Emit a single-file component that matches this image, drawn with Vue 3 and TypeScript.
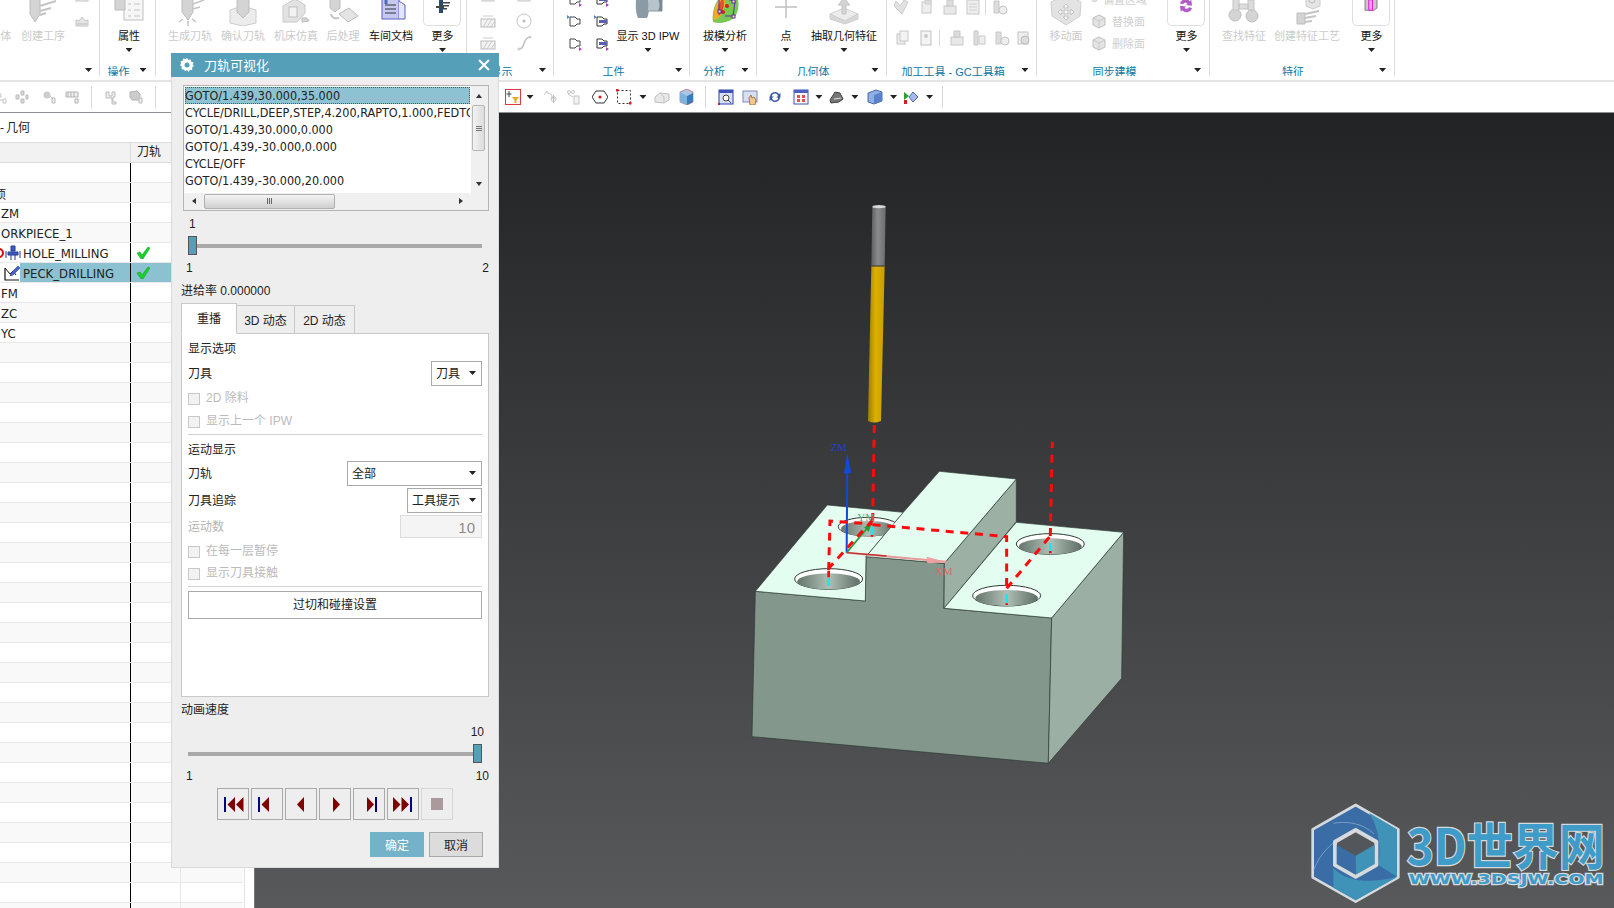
<script setup lang="ts">
interface Placed { c: number; w: number; ml?: number }
interface Placed2 extends Placed { icon?: string }
interface Tool extends Placed {
  kind: 'tool' | 'grid' | 'rows' | 'list'
  label?: string
  icon?: string
  dark?: boolean
  caret?: boolean
  box?: boolean
  cells?: string[]
  gap?: number
  rows?: Placed2[][]
  lines?: { icon: string; text: string }[]
}
interface Group { x: number; end: number; label?: string; lc?: number; ac: number; items: Tool[] }

const G = 'fill="#d4d4d4" stroke="#bdbdbd"'
const L = 'fill="none" stroke="#c4c4c4"'
const ICONS: Record<string, string> = {
  createOp: `<path d="M3-6h10v22l-5 8-5-8z" ${G}/><path d="M13 8l16-5M13 13l11-3M13 17l6-2" ${L} stroke-width="2"/>`,
  attr: `<rect x="11" y="-4" width="19" height="26" fill="#f6f6f6" stroke="#c0c0c0"/><path d="M15 6h3M21 6h6M15 12h3M21 12h6M15 18h3M21 18h6" ${L}/><path d="M2-6h10v18H2z" ${G}/>`,
  gen: `<path d="M8-6h11v20l-5 8-6-8z" ${G}/><path d="M19 6l11-4M19 11l7-2M5 24l4-3M22 24l-4-3M14 28v-5" ${L} stroke-width="1.5"/>`,
  verify: `<path d="M3 12l13-4 13 4v13l-13 3-13-3z" fill="#ececec" stroke="#ccc"/><path d="M10-6h12v20l-6 6-6-6z" ${G}/>`,
  machine: `<path d="M3 24V8l12-7 10 6v8l-8 9z" fill="#e2e2e2" stroke="#c8c8c8"/><rect x="9" y="9" width="8" height="10" fill="#f2f2f2" stroke="#c0c0c0"/><path d="M22 20c4-1 6 0 7 3l-7 1z" ${G}/>`,
  post: `<path d="M3-6h10v16l-5 4-5-4z" ${G}/><path d="M12 16l10-6 9 8-10 6z" fill="#e4e4e4" stroke="#bbb"/><path d="M4 16c1 4 4 5 8 4" ${L} stroke-width="2"/>`,
  doc: `<rect x="7" y="-5" width="17" height="26" fill="#c5c9f2" stroke="#5a62c0"/><path d="M24 3l6 4v14h-6" fill="#e3e5f9" stroke="#5a62c0"/><path d="M10 7h11M10 11h11M10 15h11" stroke="#333" stroke-width="1"/><path d="M11 1v5" stroke="#4c6bb5" stroke-width="3"/>`,
  moreTool: `<path d="M13 3h4v13h-4z" fill="#2c4a70"/><path d="M10 9h8v2h-8zM17 5h7v1.5h-7zM17 8h6v1.5h-6zM17 11h4v1.5h-4z" fill="#444"/>`,
  moreSync: `<g transform="translate(4 -1) scale(.75)"><path d="M8 10a7.5 7.5 0 0 1 13-3l2-2 1 8-8-1 2-2a4 4 0 0 0-6 1zM24 16a7.5 7.5 0 0 1-13 3l-2 2-1-8 8 1-2 2a4 4 0 0 0 6-1z" fill="#b35cc8"/></g>`,
  moreFeat: `<g transform="translate(4 -1) scale(.75)"><path d="M8 4l5-3h11v15l-4 3H8z" fill="#c8c8c8" stroke="#666"/><path d="M13 5h5v14h-5z" fill="#f4a0ec" stroke="#e020d0" stroke-width="1.4"/></g>`,
  ipw: `<path d="M6-6h9c3 6 3 20 0 26H6c-3-6-3-20 0-26z" fill="#8a9ba6"/><path d="M15 1h15v12H15c1-4 1-8 0-12z" fill="#b7c4cc" stroke="#8a98a2"/><path d="M26 1c2 4 2 8 0 12h4V1z" fill="#7a8a94"/>`,
  draft: `<path d="M4 24C2 12 8 0 15-4h12c4 8 3 18-2 24-7 5-15 6-21 4z" fill="#79c854"/><path d="M5 22C3 12 8 3 14-3c4 6 2 16-4 23z" fill="#e8b028"/><path d="M10 18c-3-6 0-14 4-18 2 6 1 12-4 18z" fill="#e05030"/><path d="M10 0h7M10 0v14h6M16 0l10 4-2 14h-8" fill="none" stroke="#5a2fa8"/><circle cx="18" cy="8" r="2" fill="#d02020"/><circle cx="14" cy="14" r="2" fill="#d02020"/><rect x="23" y="2" width="3" height="3" fill="#ffe680" stroke="#5a2fa8"/><rect x="23" y="17" width="3" height="3" fill="#ffe680" stroke="#5a2fa8"/><rect x="9" y="12" width="3" height="3" fill="#ffe680" stroke="#5a2fa8"/>`,
  point: `<path d="M16-2v22M5 9h22" stroke="#c0c0c0" stroke-width="1.5"/>`,
  extract: `<path d="M2 16l14-6 14 6-13 7z" fill="#ececec" stroke="#d2d2d2"/><path d="M2 16v5l15 5 13-5v-5l-13 7z" fill="#d8d8d8" stroke="#cfcfcf"/><path d="M16 0l6 7h-4v9h-4V7h-4z" fill="#d4d4d4" stroke="#c4c4c4"/>`,
  move: `<path d="M1 4l15-8 15 8-1 14-14 9-14-9z" fill="#e3e3e3" stroke="#cfcfcf"/><path d="M16 6l3 3h-2v4h4v-2l3 3-3 3v-2h-4v4h2l-3 3-3-3h2v-4h-4v2l-3-3 3-3v2h4V9h-2z" fill="#f4f4f4" stroke="#c4c4c4"/>`,
  find: `<circle cx="7" cy="17" r="6" ${G}/><circle cx="24" cy="18" r="6" ${G}/><path d="M5 0h6v12H5zM20 2h6v10h-6zM11 6h9v5h-9z" fill="#dcdcdc" stroke="#c4c4c4"/>`,
  feature: `<path d="M6 15h8v11H6z" ${G}/><path d="M14 16l14-3M14 20l11-2M14 24l7-1" ${L} stroke-width="2"/><path d="M15-2h14v10l-7 3-7-3z" fill="#e4e4e4" stroke="#ccc"/><circle cx="21" cy="2" r="3" fill="none" stroke="#bbb"/>`,
  s1: `<rect x="2" y="2" width="12" height="8" fill="#eee" stroke="#c4c4c4"/><path d="M4 5h8" stroke="#ccc"/>`,
  s2: `<path d="M2 13V7l3 1 3-4 3 4 3-1v6z" fill="#e6e6e6" stroke="#c4c4c4"/><path d="M3 11h10" stroke="#bbb"/>`,
  hatch: `<rect x="1" y="6" width="14" height="8" fill="#f2f2f2" stroke="#bbb"/><path d="M3 14l5-8M7 14l5-8M11 14l4-6" stroke="#ccc"/><path d="M3 3h10" stroke="#ccc"/>`,
  dot: `<circle cx="8" cy="8" r="7" fill="#fff" stroke="#c4c4c4"/><circle cx="8" cy="8" r="1.5" fill="#bbb"/>`,
  curve: `<path d="M3 14c5 0 4-5 6-8s2-4 5-4" fill="none" stroke="#c0c0c0" stroke-width="1.5"/><circle cx="3" cy="14" r="1.5" fill="#ccc"/><circle cx="14" cy="2" r="1.5" fill="#ccc"/>`,
  flagA: `<path d="M3 4h5l2 2h3v5h-3l-2 2H3z" fill="#fff" stroke="#444"/><path d="M12 12l3 2-3 2z" fill="#b040c0"/>`,
  flagB: `<path d="M3 4h5l2 2h3v5h-3l-2 2H3z" fill="#fff" stroke="#333"/><path d="M5 7h8v3H5z" fill="#5a60b8"/><path d="M12 12l3 2-3 2z" fill="#b040c0"/>`,
  flagC: `<path d="M3 4h5l2 2h3v5h-3l-2 2H3z" fill="#fff" stroke="#444"/><path d="M0 2l3 2-3 2z" fill="#4a90d0"/>`,
  flagD: `<path d="M3 4h5l2 2h3v5h-3l-2 2H3z" fill="#fff" stroke="#333"/><path d="M5 7h8v3H5z" fill="#5a60b8"/><path d="M0 2l3 2-3 2z" fill="#4a90d0"/>`,
  gc1: `<path d="M2 2l4 5 4-6 4 2-6 12-8-8z" fill="#e2e2e2" stroke="#ccc"/>`,
  gc2: `<rect x="3" y="3" width="9" height="11" fill="#eee" stroke="#c8c8c8"/><path d="M6 1h6v4H6z" fill="#ddd" stroke="#ccc"/>`,
  gc3: `<rect x="2" y="7" width="12" height="8" fill="#e8e8e8" stroke="#c8c8c8"/><rect x="5" y="1" width="6" height="6" fill="#ddd" stroke="#c8c8c8"/>`,
  gc4: `<rect x="2" y="1" width="12" height="14" fill="#eee" stroke="#c8c8c8"/><path d="M4 5h8M4 8h8M4 11h8" stroke="#d0d0d0"/>`,
  gc5: `<rect x="1" y="4" width="8" height="10" fill="#ececec" stroke="#c8c8c8"/><rect x="4" y="1" width="8" height="10" fill="#f4f4f4" stroke="#c8c8c8"/>`,
  gc6: `<rect x="3" y="1" width="10" height="14" fill="#f4f4f4" stroke="#c0c0c0"/><circle cx="8" cy="6" r="2" fill="#ccc"/>`,
  gc7: `<path d="M3 1h4v14H3z" fill="#ddd" stroke="#c8c8c8"/><path d="M8 6h6v8H8z" fill="#eee" stroke="#c8c8c8"/>`,
  gc8: `<path d="M2 2h5v12H2z" fill="#ddd" stroke="#c8c8c8"/><circle cx="11" cy="11" r="4" fill="#eee" stroke="#c4c4c4"/>`,
  gc9: `<rect x="3" y="2" width="10" height="12" fill="#eee" stroke="#c4c4c4"/><circle cx="10" cy="10" r="4" fill="#ddd" stroke="#bbb"/>`,
  face: `<path d="M2 5l6-3 6 3v7l-6 3-6-3z" fill="#e4e4e4" stroke="#bdbdbd"/><path d="M8 8v7M8 8L2 5M8 8l6-3" stroke="#c8c8c8" fill="none"/>`,
  t1: `<path d="M1 5h3v3H1zM6 5h3v3H6zM11 10h3v4h-3zM3 8l3 3h5" ${L}/>`,
  t2: `<path d="M2 6h3v4H2zM7 2h3v4H7zM7 10h3v4H7zM12 6h2v4h-2z" fill="#d8d8d8" stroke="#bbb"/>`,
  t3: `<circle cx="5" cy="6" r="3.5" fill="#ccc"/><path d="M10 9h3v5h-3zM8 7l3 3" fill="#eee" stroke="#bbb"/>`,
  t4: `<path d="M2 3h12v5H2zM4 3v5M7 3v5M10 3v5M11 10h3v4h-3z" fill="#eee" stroke="#b4b4b4"/>`,
  t5: `<path d="M2 3h3v4h3V3h3v5h-2v5h3v2H8V9H2z" fill="#f0f0f0" stroke="#bbb"/>`,
  t6: `<path d="M2 3l7-1 3 3v6H4l-2-3z" fill="#ccc" stroke="#b4b4b4"/><path d="M11 9h3v5h-3z" fill="#eee" stroke="#bbb"/>`,
  sel: `<rect x=".5" y=".5" width="15" height="15" fill="#fff" stroke="#d83c3c"/><path d="M4 2v6M1.5 5h5" stroke="#444"/><path d="M7 8h7l-2.5 3v3h-2v-3z" fill="#e8a820"/>`,
  undoCross: `<path d="M2 6l3-4v2c3 0 5 1 5 4" ${L}/><path d="M9 9h5M11.5 6v8" stroke="#bbb"/><circle cx="11.5" cy="10" r="2.5" ${L}/>`,
  chain: `<circle cx="3" cy="3" r="1.5" ${L}/><circle cx="7" cy="3" r="1.5" ${L}/><rect x="8" y="7" width="5" height="8" fill="#f3f3f3" stroke="#c4c4c4"/><path d="M2 5l5 3" ${L}/>`,
  hex: `<path d="M4 2h8l4 6-4 6H4L0 8z" fill="#fff" stroke="#333"/><circle cx="8" cy="8" r="1.6" fill="#d02020"/>`,
  dash: `<rect x="1.5" y="1.5" width="13" height="13" fill="none" stroke="#333" stroke-dasharray="2 2"/><rect x="13" y="13" width="2.5" height="2.5" fill="#d02020"/><rect x="0" y="0" width="2.5" height="2.5" fill="#d02020"/>`,
  boxGray: `<path d="M1 8l5-4 9 1v6l-5 3-9-1z" fill="#e8e8e8" stroke="#c0c0c0"/><path d="M6 4l4 4v6" ${L}/>`,
  boxBlue: `<path d="M2 3l7-3 6 3v10l-6 3-7-3z" fill="#a8c8e6" stroke="#c04850" stroke-width=".6"/><path d="M9 7l6-3v9l-6 3z" fill="#3d7ab8"/><path d="M2 3v10l7 3V7z" fill="#7fb2da"/>`,
  zoomF: `<rect x="1" y="1" width="14" height="14" fill="#d8e0f6" stroke="#2a3fb0"/><rect x="1" y="1" width="14" height="3" fill="#3c52b8"/><circle cx="8" cy="9" r="3" fill="#fff" stroke="#444"/><path d="M10 11l3 3" stroke="#444"/><rect x="0" y="14" width="2" height="2" fill="#d02020"/>`,
  pan: `<rect x="1" y="2" width="14" height="11" fill="#d8e0f0" stroke="#7a88c0"/><path d="M7 9l2-3 1 3 2-1 2 3-1 5H8z" fill="#f0c890" stroke="#a07840"/>`,
  rotate: `<path d="M3 8a5 5 0 0 1 9-3l1.5-1v4.5H9l2-1.5a3 3 0 0 0-6 1zM13 8a5 5 0 0 1-9 3L2.5 12V7.5H7L5 9a3 3 0 0 0 6-1z" fill="#3c5ca8"/>`,
  layout: `<rect x="1" y="1" width="14" height="14" fill="#fff" stroke="#4050b0"/><rect x="1" y="1" width="14" height="3" fill="#5060c0"/><path d="M4 6h3v3H4zM9 6h3v3H9zM4 10h3v3H4zM9 10h3v3H9z" fill="#e05050"/>`,
  shade: `<path d="M1 11l5-8 5 1 3 6-4 3-8 1z" fill="#777" stroke="#444"/><path d="M5 10l7-1" stroke="#ddd"/>`,
  cubeB: `<path d="M1 4l8-3 6 2v9l-8 3-6-2z" fill="#8fb0e6" stroke="#4a68a8"/><path d="M7 6l8-3v9l-8 3z" fill="#5a82c8"/>`,
  trim: `<path d="M1 3l5 4-5 4z" fill="#2ca02c"/><path d="M1 11h3v4H1z" fill="#d02020"/><path d="M10 3l5 5-5 5-4-5z" fill="#a8b8e8" stroke="#4a68a8"/>`,
}

// turn absolute centre positions into flow margins
function place<T extends Placed>(items: T[], start: number): T[] {
  let at = start
  return items.map((it) => {
    const left = it.c - it.w / 2
    const out = { ...it, ml: left - at }
    at = left + it.w
    return out
  })
}

const rawGroups: Group[] = [
  { x: 0, end: 100, ac: 89.5, items: [
    { kind: 'tool', c: 6, w: 12, label: '体' },
    { kind: 'tool', c: 43, w: 44, label: '创建工序', icon: 'createOp' },
    { kind: 'grid', c: 82, w: 16, gap: 0, cells: ['s1', 's2'] },
  ] },
  { x: 100, end: 155.6, label: '操作', lc: 119, ac: 144, items: [
    { kind: 'tool', c: 129, w: 32, label: '属性', icon: 'attr', dark: true, caret: true },
  ] },
  { x: 155.6, end: 466.6, ac: 455, items: [
    { kind: 'tool', c: 190, w: 44, label: '生成刀轨', icon: 'gen' },
    { kind: 'tool', c: 243, w: 44, label: '确认刀轨', icon: 'verify' },
    { kind: 'tool', c: 296, w: 44, label: '机床仿真', icon: 'machine' },
    { kind: 'tool', c: 343, w: 33, label: '后处理', icon: 'post' },
    { kind: 'tool', c: 391, w: 44, label: '车间文档', icon: 'doc', dark: true },
    { kind: 'tool', c: 442.5, w: 38, label: '更多', icon: 'moreTool', dark: true, caret: true, box: true },
  ] },
  { x: 466.6, end: 554, label: '显示', lc: 502, ac: 543.5, items: [
    { kind: 'grid', c: 506, w: 52, gap: 20, cells: ['s1', 's1', 'hatch', 'dot', 'hatch', 'curve'] },
  ] },
  { x: 554, end: 690, label: '工件', lc: 614, ac: 679.6, items: [
    { kind: 'grid', c: 588.5, w: 43, gap: 11, cells: ['flagA', 'flagB', 'flagC', 'flagD', 'flagA', 'flagB'] },
    { kind: 'tool', c: 648, w: 62, label: '显示 3D IPW', icon: 'ipw', dark: true, caret: true },
  ] },
  { x: 690, end: 757.5, label: '分析', lc: 714.6, ac: 746, items: [
    { kind: 'tool', c: 725, w: 44, label: '拔模分析', icon: 'draft', dark: true, caret: true },
  ] },
  { x: 757.5, end: 887.5, label: '几何体', lc: 813.6, ac: 876, items: [
    { kind: 'tool', c: 786, w: 24, label: '点', icon: 'point', dark: true, caret: true },
    { kind: 'tool', c: 844, w: 66, label: '抽取几何特征', icon: 'extract', dark: true, caret: true },
  ] },
  { x: 887.5, end: 1037.5, label: '加工工具 - GC工具箱', lc: 953.6, ac: 1026, items: [
    { kind: 'rows', c: 962.5, w: 150, rows: [
      [{ c: 902, w: 16, icon: 'gc1' }, { c: 927, w: 16, icon: 'gc2' }, { c: 950, w: 16, icon: 'gc3' }, { c: 973, w: 16, icon: 'gc4' }, { c: 986, w: 1 }, { c: 1000, w: 16, icon: 'gc8' }],
      [{ c: 903.6, w: 16, icon: 'gc5' }, { c: 926, w: 16, icon: 'gc6' }, { c: 940, w: 1 }, { c: 957, w: 16, icon: 'gc3' }, { c: 978.6, w: 16, icon: 'gc7' }, { c: 1002, w: 16, icon: 'gc8' }, { c: 1023, w: 16, icon: 'gc9' }],
    ] },
  ] },
  { x: 1037.5, end: 1209.6, label: '同步建模', lc: 1115, ac: 1198.6, items: [
    { kind: 'tool', c: 1066, w: 33, label: '移动面', icon: 'move' },
    { kind: 'list', c: 1119, w: 56, lines: [
      { icon: 'face', text: '偏置区域' },
      { icon: 'face', text: '替换面' },
      { icon: 'face', text: '删除面' },
    ] },
    { kind: 'tool', c: 1186.5, w: 38, label: '更多', icon: 'moreSync', dark: true, caret: true, box: true },
  ] },
  { x: 1209.6, end: 1394.6, label: '特征', lc: 1293.5, ac: 1383.6, items: [
    { kind: 'tool', c: 1244, w: 44, label: '查找特征', icon: 'find' },
    { kind: 'tool', c: 1307, w: 66, label: '创建特征工艺', icon: 'feature' },
    { kind: 'tool', c: 1371.5, w: 38, label: '更多', icon: 'moreFeat', dark: true, caret: true, box: true },
  ] },
]

const groups = rawGroups.map((g) => ({
  ...g,
  width: g.end - g.x,
  pad: g.lc ? g.end - g.x - 2 * (g.lc - g.x) : 0,
  caretRight: g.end - g.ac - 3.5,
  items: place(g.items, g.x).map((it) => ({
    ...it,
    rows: it.rows?.map((r) => place(r, it.c - it.w / 2)),
  })),
}))

const toolbar = place<Placed2>([
  { c: 0, w: 16, icon: 't1' }, { c: 22, w: 16, icon: 't2' }, { c: 50, w: 16, icon: 't3' }, { c: 72, w: 16, icon: 't4' },
  { c: 91, w: 1 }, { c: 112, w: 16, icon: 't5' }, { c: 136, w: 16, icon: 't6' }, { c: 155.5, w: 1 },
  { c: 513, w: 16, icon: 'sel' }, { c: 530, w: 7 }, { c: 550, w: 16, icon: 'undoCross' }, { c: 573.6, w: 16, icon: 'chain' },
  { c: 600, w: 16, icon: 'hex' }, { c: 624, w: 16, icon: 'dash' }, { c: 643, w: 7 }, { c: 662, w: 16, icon: 'boxGray' },
  { c: 685.7, w: 16, icon: 'boxBlue' }, { c: 705.7, w: 1 }, { c: 725.7, w: 16, icon: 'zoomF' }, { c: 750, w: 16, icon: 'pan' },
  { c: 774.6, w: 16, icon: 'rotate' }, { c: 801, w: 16, icon: 'layout' }, { c: 819, w: 7 }, { c: 837.5, w: 16, icon: 'shade' },
  { c: 855, w: 7 }, { c: 875, w: 16, icon: 'cubeB' }, { c: 893.6, w: 7 }, { c: 910.7, w: 16, icon: 'trim' },
  { c: 929.6, w: 7 }, { c: 943, w: 1 },
], 0)

const treeNames = ['', '项', 'ZM', 'ORKPIECE_1', 'HOLE_MILLING', 'PECK_DRILLING', 'FM', 'ZC', 'YC']
const rows = Array.from({ length: 38 }, (_, i) => ({ name: treeNames[i] ?? '', i }))

const listLines = [
  'GOTO/1.439,30.000,35.000',
  'CYCLE/DRILL,DEEP,STEP,4.200,RAPTO,1.000,FEDTO,-5.000,MMPM',
  'GOTO/1.439,30.000,0.000',
  'GOTO/1.439,-30.000,0.000',
  'CYCLE/OFF',
  'GOTO/1.439,-30.000,20.000',
]

const transport = [
  { tri: 'M9.5 15.5L17 8v15zM18 15.5L25.5 8v15z', bar: 'M6 8h2v15H6z' },
  { tri: 'M9.5 15.5L17 8v15z', bar: 'M6 8h2v15H6z' },
  { tri: 'M11 15.5L18 8v15z', bar: '' },
  { tri: 'M13 8l7 7.5-7 7.5z', bar: '' },
  { tri: 'M13 8l7 7.5-7 7.5z', bar: 'M21 8h2v15h-2z' },
  { tri: 'M5 8l7.5 7.5L5 23zM13.5 8l7.5 7.5-7.5 7.5z', bar: 'M22 8h2v15h-2z' },
]

const holes = [
  { x: 266, y: 477 },
  { x: 800, y: 527 },
  { x: 931, y: 372 },
]
</script>

<template>
  <div class="app">
    <header class="ribbon">
      <section v-for="g in groups" :key="g.x" class="group" :style="{ width: g.width + 'px' }">
        <div class="g-top">
          <template v-for="(it, n) in g.items" :key="n">
            <div v-if="it.kind === 'tool'" class="tool" :class="{ dark: it.dark }" :style="{ marginLeft: it.ml + 'px', width: it.w + 'px' }">
              <div class="tool-icon" :class="{ boxed: it.box }">
                <svg v-if="it.icon" width="32" height="28" viewBox="0 0 32 28"><g v-html="ICONS[it.icon]" /></svg>
              </div>
              <div class="tool-label">{{ it.label }}</div>
              <i v-if="it.caret" class="caret" />
            </div>
            <div v-else-if="it.kind === 'grid'" class="mini-grid" :style="{ marginLeft: it.ml + 'px', width: it.w + 'px', columnGap: it.gap + 'px', gridTemplateColumns: it.w > 16 ? '16px 16px' : '16px' }">
              <svg v-for="(c, k) in it.cells" :key="k" width="16" height="16" viewBox="0 0 16 16"><g v-html="ICONS[c]" /></svg>
            </div>
            <div v-else-if="it.kind === 'rows'" class="mini-rows" :style="{ marginLeft: it.ml + 'px', width: it.w + 'px' }">
              <div v-for="(r, k) in it.rows" :key="k" class="mini-row">
                <template v-for="(s, m) in r" :key="m">
                  <svg v-if="s.icon" width="16" height="16" viewBox="0 0 16 16" :style="{ marginLeft: s.ml + 'px' }"><g v-html="ICONS[s.icon]" /></svg>
                  <span v-else class="tb-sep short" :style="{ marginLeft: s.ml + 'px' }" />
                </template>
              </div>
            </div>
            <div v-else class="mini-list" :style="{ marginLeft: it.ml + 'px', width: it.w + 'px' }">
              <div v-for="l in it.lines" :key="l.text" class="mini-line">
                <svg width="16" height="16" viewBox="0 0 16 16"><g v-html="ICONS[l.icon]" /></svg>
                <span>{{ l.text }}</span>
              </div>
            </div>
          </template>
        </div>
        <div class="g-foot" :style="{ paddingRight: Math.max(g.pad, 0) + 'px' }">
          <span v-if="g.label">{{ g.label }}</span>
          <i class="caret foot-caret" :style="{ right: g.caretRight + 'px' }" />
        </div>
      </section>
    </header>

    <div class="toolbar">
      <template v-for="(t, i) in toolbar" :key="i">
        <svg v-if="t.icon" width="16" height="16" viewBox="0 0 16 16" class="tb-ic" :style="{ marginLeft: t.ml + 'px' }"><g v-html="ICONS[t.icon]" /></svg>
        <i v-else-if="t.w > 1" class="caret tb-caret" :style="{ marginLeft: t.ml + 'px' }" />
        <span v-else class="tb-sep" :style="{ marginLeft: t.ml + 'px' }" />
      </template>
    </div>

    <main class="main">
      <aside class="nav">
        <div class="tree">
          <div class="tree-title"><span class="dash">-</span>几何</div>
          <div class="tree-head">
            <div class="cell c1" />
            <div class="cell c2">刀轨</div>
          </div>
          <div class="tree-rows">
            <div v-for="r in rows" :key="r.i" class="tree-row" :class="{ odd: r.i % 2 === 1 }">
              <div class="cell c1 name" :class="{ indent: r.i === 4 || r.i === 5, picked: r.i === 5 }">
                <span v-if="r.i === 1" class="cut">{{ r.name }}</span>
                <template v-else>
                  <svg v-if="r.i === 4" class="row-ic" width="22" height="16" viewBox="0 0 22 16">
                    <circle cx="-1" cy="8" r="4" fill="none" stroke="#d01010" stroke-width="2" />
                    <path d="M11 1h4v5h-4zM8 7h10v3H8zM6 6v7M20 6v7M11 10v5M15 10v5" fill="#3f5fc0" stroke="#223a90" stroke-width="1" />
                  </svg>
                  <svg v-if="r.i === 5" class="row-ic" width="22" height="16" viewBox="0 0 22 16">
                    <path d="M5 3v12h14" fill="none" stroke="#111" stroke-width="1.2" />
                    <path d="M5 3l5 6 3-3 3 4" fill="none" stroke="#111" />
                    <path d="M11 8l7-7 2 2-7 7-3 1z" fill="#4a5fd0" stroke="#2a3a90" stroke-width=".6" />
                  </svg>
                  <span class="nm">{{ r.name }}</span>
                </template>
              </div>
              <div class="cell c2" :class="{ picked: r.i === 5 }">
                <svg v-if="r.i === 4 || r.i === 5" width="14" height="13" viewBox="0 0 14 13"><path d="M1 7l3-1 2 3 6-8 2 1-7 11H5z" fill="#17d02c" stroke="#0c9c1e" stroke-width=".5" /></svg>
              </div>
              <div class="cell c3" />
            </div>
          </div>
        </div>
      </aside>

      <div class="view">
        <svg class="scene" width="1360" height="795" viewBox="254 113 1360 795">
          <defs>
            <linearGradient id="bore" x1="0" x2="1" y1="0" y2="0">
              <stop offset="0" stop-color="#66766d" />
              <stop offset=".5" stop-color="#aebfb5" />
              <stop offset="1" stop-color="#5f6e66" />
            </linearGradient>
            <linearGradient id="shank" x1="0" x2="1" y1="0" y2="0">
              <stop offset="0" stop-color="#5f5f5f" />
              <stop offset=".45" stop-color="#8b8b8b" />
              <stop offset="1" stop-color="#6c6c6c" />
            </linearGradient>
            <linearGradient id="gold" x1="0" x2="1" y1="0" y2="0">
              <stop offset="0" stop-color="#9c7d00" />
              <stop offset=".45" stop-color="#dcb000" />
              <stop offset="1" stop-color="#c89e00" />
            </linearGradient>
          </defs>

          <g transform="translate(820 190) scale(.3333)">
            <path d="M157 50L154 228H194L197 50Z" fill="url(#shank)" />
            <ellipse cx="177" cy="50" rx="20" ry="5" fill="#d8d8d8" />
            <path d="M154 228L144 693Q163 702 183 693L194 228Z" fill="url(#gold)" />
            <path d="M154 228H194" stroke="#333" stroke-width="3" />
          </g>

          <g transform="translate(740 420) scale(.3333)" stroke="#2c3a34" stroke-width="2" stroke-linejoin="round">
            <path d="M46 514L376 543L378 410L613 430L612 565L935 594L925 1030L36 950Z" fill="#84978d" />
            <path d="M1151 337L1145 775L925 1030L935 594Z" fill="#9bafa4" />
            <path d="M262 255L490 277L378 410L376 543L46 514Z" fill="#e3fdf0" />
            <ellipse cx="385" cy="320" rx="90" ry="28" fill="#fff" stroke-width="3" />
            <ellipse cx="385" cy="326" rx="82" ry="23" fill="url(#bore)" stroke="none" />
            <path d="M829 177L829 305L612 565L613 430Z" fill="#9cb0a4" />
            <path d="M598 154L829 177L613 430L378 410L490 277Z" fill="#e3fdf0" />
            <path d="M829 307L1151 337L935 594L612 565Z" fill="#e3fdf0" />
            <g v-for="h in holes" :key="h.x">
              <ellipse :cx="h.x" :cy="h.y" rx="102" ry="31" fill="#fff" stroke-width="3" />
              <ellipse :cx="h.x" :cy="h.y + 7" rx="94" ry="24" fill="url(#bore)" stroke="none" />
            </g>
          </g>

          <g transform="translate(740 420) scale(.3333)" fill="none">
            <path d="M320 398L322 130" stroke="#1348d8" stroke-width="6" />
            <path d="M322 100L312 160H334Z" fill="#1348d8" />
            <path d="M320 398L620 425" stroke="#e89a9a" stroke-width="6" />
            <path d="M320 398L440 408" stroke="#c03030" stroke-width="4" />
            <path d="M622 427L560 410L562 430Z" fill="#f0a0a0" />
            <path d="M320 398L392 312" stroke="#2a9a3a" stroke-width="5" />
            <path d="M396 308L372 322L386 336Z" fill="#2a9a3a" />
            <g stroke="#ff0a0a" stroke-width="9" stroke-dasharray="24 20">
              <path d="M403 15L398 300" />
              <path d="M398 314L800 350L800 500" />
              <path d="M800 505L931 348" />
              <path d="M931 348L937 65" />
              <path d="M398 300L266 445" />
              <path d="M266 450L270 303L398 312" />
            </g>
            <g stroke-width="8">
              <path d="M266 452V472M396 345V350M800 550V555M931 393V400" stroke="#ff0a0a" />
              <path d="M266 475V498M396 320V344M800 522V548M931 370V392" stroke="#18e8f0" />
            </g>
            <text x="272" y="94" class="axis" fill="#2040c8">ZM</text>
            <text x="585" y="466" class="axis" fill="#e26868">XM</text>
            <text x="352" y="302" class="axis" fill="#66a878">YM</text>
          </g>

          <g transform="translate(1300 790) scale(.3333)">
            <path d="M167 45L295 118V262L167 335L38 262V118Z" fill="#3a6ca6" stroke="#d7dadc" stroke-width="8" stroke-linejoin="round" />
            <path d="M207 68L291 118V260L235 225C245 170 235 110 207 68Z" fill="#3f93b8" />
            <path d="M100 235C150 285 225 275 291 262L167 331L100 293Z" fill="#3f93b8" />
            <path d="M42 238C60 190 95 160 120 145M100 100C140 92 190 100 222 132" fill="none" stroke="#8fb5cf" stroke-width="2" />
            <path d="M167 120L229 155V225L167 260L105 225V155Z" fill="#53565a" stroke="#d7dadc" stroke-width="12" stroke-linejoin="round" />
            <path d="M110 164L167 197V254L110 222Z" fill="#3a6ca6" />
            <path d="M224 164L167 197V254L224 222Z" fill="#3f93b8" />
            <text x="320" y="226" textLength="595" lengthAdjust="spacingAndGlyphs" class="logo-big">3D世界网</text>
            <text x="326" y="283" textLength="585" lengthAdjust="spacingAndGlyphs" class="logo-url">WWW.3DSJW.COM</text>
          </g>
        </svg>
      </div>
    </main>

    <div class="dialog">
      <div class="title">
        <svg width="16" height="16" viewBox="0 0 16 16">
          <path d="M8 1l1.4 2 2.3-.6.5 2.3 2.3.7-.7 2.3 1.2 1.3-1.9 1.5.2 2.4-2.4.2-1.3 1.8L8 13l-1.7 1.2-1.3-1.8-2.4-.2.2-2.4L.9 8.3l1.2-1.6-.7-2.3 2.3-.7.5-2.3 2.3.6z" fill="#fff" />
          <circle cx="8" cy="8" r="2.5" fill="#559fb9" />
        </svg>
        <span class="title-text">刀轨可视化</span>
        <svg class="close" width="12" height="12" viewBox="0 0 12 12"><path d="M1 1l10 10M11 1L1 11" stroke="#fff" stroke-width="2" /></svg>
      </div>

      <div class="body">
        <div class="listbox">
          <div class="lines">
            <div v-for="(l, i) in listLines" :key="i" class="line" :class="{ on: i === 0 }">{{ l }}</div>
          </div>
          <div class="vbar">
            <i class="tri up" />
            <div class="vthumb"><b /><b /><b /></div>
            <i class="tri down" />
          </div>
          <div class="hbar">
            <i class="tri left" />
            <div class="hthumb"><b /><b /><b /></div>
            <i class="tri right" />
          </div>
        </div>

        <div class="val first">1</div>
        <div class="slider"><div class="track" /><div class="handle" /></div>
        <div class="ends"><span>1</span><span>2</span></div>
        <div class="feed">进给率 0.000000</div>

        <div class="tabs">
          <div class="tab on">重播</div>
          <div class="tab">3D 动态</div>
          <div class="tab">2D 动态</div>
        </div>
        <div class="panel">
          <div class="sec">显示选项</div>
          <div class="field m3"><span>刀具</span><div class="drop d-s">刀具<i class="caret" /></div></div>
          <div class="chk m6"><i />2D 除料</div>
          <div class="chk m10"><i />显示上一个 IPW</div>
          <div class="sep m6" />
          <div class="sec m4">运动显示</div>
          <div class="field m2"><span>刀轨</span><div class="drop d-l">全部<i class="caret" /></div></div>
          <div class="field m2"><span>刀具追踪</span><div class="drop d-m">工具提示<i class="caret" /></div></div>
          <div class="field num m2"><span>运动数</span><div class="count">10</div></div>
          <div class="chk m7"><i />在每一层暂停</div>
          <div class="chk m9"><i />显示刀具接触</div>
          <div class="sep m6" />
          <button class="wide">过切和碰撞设置</button>
        </div>

        <div class="speed">动画速度</div>
        <div class="val top-right">10</div>
        <div class="slider end"><div class="track" /><div class="handle" /></div>
        <div class="ends"><span>1</span><span>10</span></div>

        <div class="transport">
          <div v-for="s in transport" :key="s.tri + s.bar" class="t-btn">
            <svg width="30" height="30" viewBox="0 0 30 30"><path :d="s.tri" fill="#800000" /><path v-if="s.bar" :d="s.bar" fill="#000080" /></svg>
          </div>
          <div class="t-btn off"><span class="stop" /></div>
        </div>

        <div class="actions">
          <button class="ok">确定</button>
          <button class="cancel">取消</button>
        </div>
      </div>
    </div>
  </div>
</template>

<style>
html, body { margin: 0; overflow: hidden; background: #fff; }
</style>

<style scoped>
.app {
  width: 1614px; height: 908px; position: relative; overflow: hidden; background: #fff; color: #222;
  font: 12px "Liberation Sans", "Noto Sans CJK SC", sans-serif;
}
.ribbon { height: 80px; display: flex; border-bottom: 2px solid #e4e4e4; overflow: hidden; }
.group { flex: none; height: 76px; box-sizing: border-box; border-right: 1px solid #dcdcdc; display: flex; flex-direction: column; position: relative; }
.g-top { height: 62px; display: flex; }
.tool { flex: none; display: flex; flex-direction: column; align-items: center; font-size: 11px; color: #cbcbcb; white-space: nowrap; }
.tool.dark { color: #111; }
.tool-icon { height: 26px; width: 38px; display: flex; justify-content: center; align-items: flex-end; overflow: hidden; flex: none; box-sizing: border-box; }
.tool-icon.boxed { border: 1px solid #dedede; border-top: 0; border-radius: 0 0 5px 5px; }
.tool-label { height: 14px; line-height: 14px; margin-top: 3px; }
.caret { display: block; width: 7px; height: 4px; background: #222; clip-path: polygon(0 0, 100% 0, 50% 100%); flex: none; }
.tool .caret { margin-top: 5px; }
.mini-grid { display: grid; grid-auto-rows: 22px; margin-top: -12px; flex: none; align-items: center; }
.mini-rows { flex: none; margin-top: -1px; display: flex; flex-direction: column; gap: 15px; }
.mini-row { display: flex; height: 16px; }
.mini-row svg { flex: none; }
.mini-list { flex: none; margin-top: -12px; font-size: 11px; color: #cfcfcf; }
.mini-line { height: 22px; display: flex; align-items: center; gap: 5px; white-space: nowrap; }
.g-foot { height: 14px; line-height: 20px; text-align: center; font-size: 11px; color: #0a78a4; overflow: hidden; position: relative; box-sizing: border-box; white-space: nowrap; }
.foot-caret { position: absolute; top: 6px; }

.toolbar { height: 30px; display: flex; align-items: center; border-bottom: 1px solid #8e9194; overflow: hidden; }
.tb-ic { flex: none; }
.tb-sep { display: block; width: 1px; height: 22px; background: #d8d8d8; flex: none; }
.tb-sep.short { height: 16px; }

.main { height: 795px; display: flex; }
.nav { width: 254px; flex: none; background: #fff; }
.tree { width: 245px; height: 795px; box-sizing: border-box; border-right: 1px solid #e2e2e2; overflow: hidden; }
.tree-title { height: 29px; line-height: 31px; font-size: 12px; }
.dash { display: inline-block; width: 6px; }
.tree-head { height: 21px; display: flex; background: #f2f2f2; border-top: 1px solid #ddd; border-bottom: 1px solid #ddd; box-sizing: border-box; }
.tree-head .c1 { border-right: 1px solid #ddd; }
.tree-head .c2 { line-height: 19px; padding-left: 6px; }
.tree-rows { width: 243px; }
.tree-row { height: 20px; display: flex; box-sizing: border-box; border-bottom: 1px solid #e8e8e8; }
.tree-row.odd { background: #f9f9f9; }
.cell { height: 100%; box-sizing: border-box; flex: none; }
.c1 { width: 131px; }
.tree-rows .c1 { border-right: 1px solid #000; }
.c2 { width: 50px; }
.tree-rows .c2 { border-right: 1px solid #e8e8e8; padding-left: 5px; display: flex; align-items: center; }
.c3 { flex: 1; }
.name { white-space: nowrap; overflow: hidden; display: flex; align-items: center; padding-left: 1px; }
.nm { font: 13px "DejaVu Sans Condensed", "DejaVu Sans", sans-serif; font-stretch: condensed; padding-top: 1px; }
.name.indent { padding-left: 0; }
.row-ic { flex: none; margin-right: 1px; }
.picked { background: #8bc1d1; }
.name.picked { background: linear-gradient(90deg, #fff 20px, #8bc1d1 20px); }
.cut { margin-left: -7px; padding-top: 2px; }

.view { flex: 1; position: relative; background: linear-gradient(#212325, #58595b); border-left: 1px solid #6f7a84; box-sizing: border-box; overflow: hidden; }
.scene { display: block; margin-left: -1px; }
.axis { font: 33px "Liberation Serif", serif; }
.logo-big { font: 700 150px "Noto Sans CJK SC", sans-serif; fill: #3f9cc8; stroke: #d7dadc; stroke-width: 7px; paint-order: stroke; }
.logo-url { font: 700 44px "DejaVu Sans", sans-serif; fill: #3f9cc8; stroke: #d7dadc; stroke-width: 7px; paint-order: stroke; }

.dialog { position: absolute; left: 171px; top: 53px; width: 328px; height: 815px; box-sizing: border-box; background: #eee; border: 1px solid #dadada; border-top: 0; }
.title { height: 24px; margin: 0 -1px; background: #559fb9; color: #fff; display: flex; align-items: center; padding: 0 9px 0 8px; font-size: 13px; }
.title-text { margin: -2px 0 0 9px; flex: 1; }
.close { flex: none; }
.body { padding: 8px 9px 0; font-size: 12px; }
.listbox { margin-left: 2px; width: 306px; height: 126px; box-sizing: border-box; border: 1px solid #b4b4b4; background: #f0f0f0; position: relative; }
.lines { width: 287px; height: 108px; background: #fff; padding: 1px 0 0 1px; overflow: hidden; box-sizing: border-box; }
.line { height: 17px; white-space: nowrap; font: 12.5px/18px "DejaVu Sans Condensed", "DejaVu Sans", sans-serif; font-stretch: condensed; color: #222; width: 285px; overflow: hidden; box-sizing: border-box; }
.line.on { background: #8cc2d2; outline: 1px dotted #555; outline-offset: -1px; }
.vbar { position: absolute; right: 2px; top: 1px; width: 15px; height: 107px; display: flex; flex-direction: column; align-items: center; }
.vthumb { width: 13px; height: 46px; margin-top: 7px; border: 1px solid #b8b8b8; border-radius: 2px; background: linear-gradient(90deg, #f2f2f2, #dcdcdc); display: flex; flex-direction: column; gap: 1px; justify-content: center; align-items: center; box-sizing: border-box; flex: none; }
.vthumb b { display: block; width: 6px; height: 1px; background: #777; }
.hbar { position: absolute; left: 1px; bottom: 1px; width: 285px; height: 16px; display: flex; align-items: center; background: #f0f0f0; }
.hthumb { width: 131px; height: 15px; margin-left: 8px; border: 1px solid #b0b0b0; border-radius: 2px; background: linear-gradient(#f4f4f4, #cfcfcf); display: flex; gap: 1px; justify-content: center; align-items: center; box-sizing: border-box; }
.hthumb b { display: block; width: 1px; height: 6px; background: #666; }
.tri { display: block; width: 0; height: 0; border: 3px solid transparent; flex: none; }
.tri.up { border-bottom: 4px solid #333; border-top: 0; margin-top: 7px; }
.tri.down { border-top: 4px solid #333; border-bottom: 0; margin-top: 31px; }
.tri.left { border-right: 4px solid #333; border-left: 0; margin-left: 7px; }
.tri.right { border-left: 4px solid #333; border-right: 0; margin-left: auto; margin-right: 7px; }

.val { height: 14px; line-height: 14px; }
.val.first { margin-top: 6px; padding-left: 8px; }
.val.top-right { margin-top: 9px; text-align: right; padding-right: 5px; }
.slider { height: 19px; margin: 5px 7px 0; position: relative; display: flex; align-items: center; }
.track { height: 4px; background: #a9a9a9; flex: 1; }
.handle { position: absolute; left: 0; top: 0; width: 9px; height: 19px; box-sizing: border-box; background: #559fb9; border: 1px solid #555; }
.slider.end .handle { left: auto; right: 0; }
.ends { height: 14px; line-height: 14px; margin-top: 6px; display: flex; justify-content: space-between; padding-left: 5px; }
.feed { height: 14px; line-height: 16px; margin-top: 8px; }

.tabs { height: 31px; margin-top: 6px; display: flex; align-items: flex-end; position: relative; margin-bottom: -1px; }
.tab { height: 29px; line-height: 30px; width: 59px; text-align: center; box-sizing: border-box; border: 1px solid #c8c8c8; margin-right: -1px; background: #eee; }
.tab:last-child { width: 61px; }
.tab.on { height: 31px; width: 56px; line-height: 30px; background: #fff; position: relative; z-index: 1; border-bottom-color: #fff; }
.panel { height: 364px; box-sizing: border-box; padding: 4px 6px 0; background: #fff; border: 1px solid #c8c8c8; width: 308px; }
.sec { height: 20px; line-height: 23px; }
.field { display: flex; justify-content: space-between; align-items: center; height: 25px; }
.field > span { margin-top: -2px; }
.field.num { height: 23px; color: #b4b4b4; }
.drop { height: 25px; box-sizing: border-box; border: 1px solid #a9a9a9; background: #fff; line-height: 25px; padding-left: 4px; position: relative; }
.drop .caret { position: absolute; right: 5px; top: 9px; }
.d-s { width: 51px; }
.d-m { width: 75px; }
.d-l { width: 135px; }
.count { width: 82px; height: 23px; box-sizing: border-box; border: 1px solid #dcdcdc; background: #f4f4f4; text-align: right; line-height: 23px; padding-right: 6px; font-size: 15px; color: #8c8c8c; }
.chk { height: 13px; line-height: 15px; display: flex; align-items: center; color: #bbb; white-space: nowrap; }
.chk i { display: block; width: 12px; height: 12px; box-sizing: border-box; border: 1px solid #c8c8c8; background: #f2f2f2; margin-right: 6px; flex: none; }
.sep { height: 1px; background: #d2d2d2; }
.wide { display: block; width: 100%; height: 28px; margin-top: 4px; background: #fff; border: 1px solid #a9a9a9; font: inherit; color: #222; padding: 0 0 3px; }
.m2 { margin-top: 2px; } .m3 { margin-top: 3px; } .m4 { margin-top: 4px; } .m6 { margin-top: 6px; }
.m7 { margin-top: 7px; } .m9 { margin-top: 9px; } .m10 { margin-top: 10px; }

.speed { height: 14px; line-height: 16px; margin-top: 5px; }
.transport { display: flex; gap: 2px; height: 32px; margin-top: 5px; padding-left: 36px; }
.t-btn { width: 32px; height: 32px; box-sizing: border-box; border: 1px solid #aaa; display: flex; align-items: center; justify-content: center; }
.t-btn.off { border-color: #d6d6d6; }
.stop { display: block; width: 12px; height: 12px; background: #ab9a9c; }
.actions { display: flex; justify-content: flex-end; gap: 5px; margin-top: 12px; padding-right: 6px; }
.actions button { width: 54px; height: 25px; font: inherit; padding: 0; box-sizing: border-box; }
.ok { background: #73b2c8; color: #fff; border: 0; }
.cancel { background: #dcdcdc; color: #222; border: 1px solid #aaa; }
</style>
